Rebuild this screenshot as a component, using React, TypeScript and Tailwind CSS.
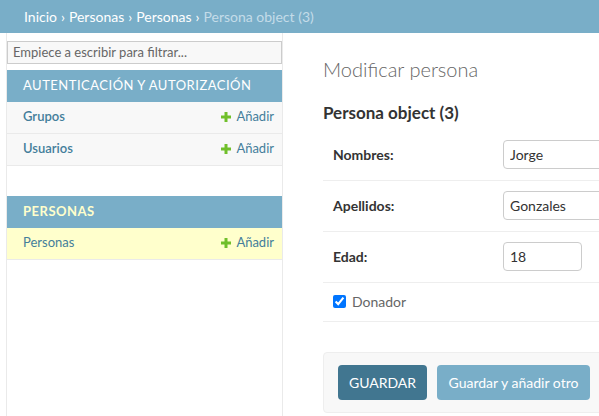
import React from "react";

const font = { fontFamily: '"Lato", "Liberation Sans", sans-serif' };

function AddLink() {
  return (
    <span className="flex items-center gap-[5px] text-[13px] text-[#447e9b]">
      <svg width="10" height="10" viewBox="0 0 10 10">
        <path d="M3.5 0h3v3.5H10v3H6.5V10h-3V6.5H0v-3h3.5z" fill="#70bf2b" />
      </svg>
      Añadir
    </span>
  );
}

function ModuleRow({ name, current, bold }: { name: string; current?: boolean; bold?: boolean }) {
  return (
    <div
      className={
        "flex h-[32px] items-center justify-between border-b border-[#eaeaea] pl-4 pr-2 " +
        (current ? "bg-[#ffffcc]" : "bg-[#f8f8f8]")
      }
    >
      <span className={"text-[13px] text-[#447e9b] " + (bold ? "font-semibold" : "font-normal")}>{name}</span>
      <AddLink />
    </div>
  );
}

function FieldRow({ label, value, inputWidth }: { label: string; value: string; inputWidth: string }) {
  return (
    <div className="flex h-[51px] items-center border-b border-[#eeeeee] px-[10px]">
      <label className="w-[170px] shrink-0 text-[14px] font-bold text-[#333]">{label}</label>
      <input
        readOnly
        value={value}
        className={
          "h-[29px] shrink-0 rounded-[4px] border border-[#cccccc] px-[6px] text-[14px] text-[#333] outline-none " +
          inputWidth
        }
      />
    </div>
  );
}

export default function App() {
  return (
    <div className="h-[416px] w-[599px] overflow-hidden bg-white" style={font}>
      <div className="flex h-[33px] items-center bg-[#79aec8] pl-6 text-[14px] text-white">
        <span>Inicio</span>
        <span className="mx-[4px]">›</span>
        <span>Personas</span>
        <span className="mx-[4px]">›</span>
        <span>Personas</span>
        <span className="mx-[4px]">›</span>
        <span className="text-[#c4dce8]">Persona object (3)</span>
      </div>

      <div className="flex h-[383px]">
        <aside className="ml-[6px] w-[277px] shrink-0 border-x border-[#eaeaea] pt-[6px]">
          <input
            readOnly
            placeholder="Empiece a escribir para filtrar..."
            className="h-[23px] w-full border border-[#cccccc] bg-[#f8f8f8] px-[5px] text-[13px] text-[#666] placeholder:text-[#666] outline-none"
          />
          <div className="mt-[6px]">
            <div className="flex h-[32px] items-center bg-[#79aec8] pl-4 text-[13px] tracking-[0.5px] text-white">
              AUTENTICACIÓN Y AUTORIZACIÓN
            </div>
            <ModuleRow name="Grupos" bold />
            <ModuleRow name="Usuarios" bold />
          </div>
          <div className="mt-[30px]">
            <div className="flex h-[32px] items-center bg-[#79aec8] pl-4 text-[13px] font-bold tracking-[0.5px] text-[#ffffcc]">
              PERSONAS
            </div>
            <ModuleRow name="Personas" current />
          </div>
        </aside>

        <main className="min-w-0 flex-1 overflow-hidden pl-[40px]">
          <h1 className="mt-[21px] text-[20px] font-light text-[#666]">Modificar persona</h1>
          <h2 className="mt-[16px] text-[17px] font-bold text-[#333]">Persona object (3)</h2>
          <div className="mt-[4px] w-[420px]">
            <FieldRow label="Nombres:" value="Jorge" inputWidth="w-[220px]" />
            <FieldRow label="Apellidos:" value="Gonzales" inputWidth="w-[220px]" />
            <FieldRow label="Edad:" value="18" inputWidth="w-[79px]" />
            <div className="flex h-[39px] items-center gap-[6px] border-b border-[#eeeeee] px-[10px]">
              <input type="checkbox" checked readOnly className="h-[13px] w-[13px]" />
              <span className="text-[14px] text-[#666]">Donador</span>
            </div>
          </div>
          <div className="mt-[30px] flex w-[420px] gap-[10px] rounded-[4px] border border-[#eeeeee] bg-[#f8f8f8] px-[14px] py-[12px]">
            <button className="h-[35px] w-[89px] rounded-[4px] bg-[#417690] text-[14px] text-white">GUARDAR</button>
            <button className="h-[35px] w-[153px] rounded-[4px] bg-[#79aec8] text-[14px] text-white">
              Guardar y añadir otro
            </button>
          </div>
        </main>
      </div>
    </div>
  );
}
